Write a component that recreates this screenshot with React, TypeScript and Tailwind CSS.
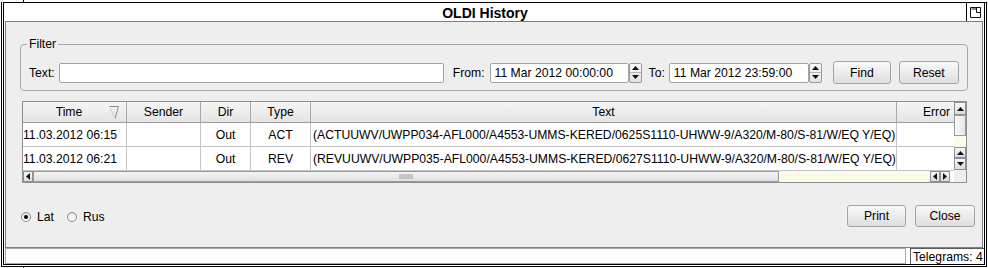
import React from "react";

const rows = [
  {
    time: "11.03.2012 06:15",
    dir: "Out",
    type: "ACT",
    text: "(ACTUUWV/UWPP034-AFL000/A4553-UMMS-KERED/0625S1110-UHWW-9/A320/M-80/S-81/W/EQ Y/EQ)",
  },
  {
    time: "11.03.2012 06:21",
    dir: "Out",
    type: "REV",
    text: "(REVUUWV/UWPP035-AFL000/A4553-UMMS-KERED/0627S1110-UHWW-9/A320/M-80/S-81/W/EQ Y/EQ)",
  },
];

function Arrow({ dir }: { dir: "up" | "down" | "left" | "right" }) {
  const d =
    dir === "up"
      ? "M0 4 L3.5 0 L7 4Z"
      : dir === "down"
      ? "M0 0 L7 0 L3.5 4Z"
      : dir === "left"
      ? "M4 0 L4 7 L0 3.5Z"
      : "M0 0 L4 3.5 L0 7Z";
  const horiz = dir === "left" || dir === "right";
  return (
    <svg width={horiz ? 4 : 7} height={horiz ? 7 : 4} viewBox={horiz ? "0 0 4 7" : "0 0 7 4"}>
      <path d={d} fill="#111" />
    </svg>
  );
}

function Spinner() {
  return (
    <div className="flex h-[20px] w-[13px] flex-col rounded-[2px] border border-[#9a9a9a] bg-linear-to-b from-[#fafafa] to-[#e2e2e2]">
      <div className="flex flex-1 items-center justify-center border-b border-[#b5b5b5]">
        <Arrow dir="up" />
      </div>
      <div className="flex flex-1 items-center justify-center">
        <Arrow dir="down" />
      </div>
    </div>
  );
}

function ScrollBtn({ dir, className }: { dir: "up" | "down" | "left" | "right"; className: string }) {
  return (
    <div className={`flex shrink-0 items-center justify-center border border-[#8f8f8f] bg-linear-to-b from-[#f8f8f8] to-[#dcdcdc] ${className}`}>
      <Arrow dir={dir} />
    </div>
  );
}

function Radio({ checked, label }: { checked: boolean; label: string }) {
  return (
    <label className="flex items-center">
      <span className="flex h-[10px] w-[10px] items-center justify-center rounded-full border border-[#8a8a8a] bg-linear-to-b from-[#e4e4e4] to-white">
        {checked && <span className="h-[4px] w-[4px] rounded-full bg-black" />}
      </span>
      <span className="ml-[6px] text-[12.2px] leading-[14px]">{label}</span>
    </label>
  );
}

const btn =
  "h-[22px] rounded-[3px] border border-[#a4a4a4] bg-linear-to-b from-[#f9f9f9] to-[#dedede] text-[12.2px] leading-[14px] text-black";

export default function App() {
  return (
    <div className="relative h-[268px] w-[988px] overflow-hidden bg-white px-[1px] pt-[2px] font-['Liberation_Sans',Arial,sans-serif] text-black">
      <div className="absolute left-[23px] top-0 h-[2px] w-px bg-black" />
      <div className="absolute bottom-0 left-[23px] h-[2px] w-px bg-black" />

      <div className="flex h-[265px] flex-col border-x-[3px] border-b-[3px] border-t border-double border-black">
        {/* title bar */}
        <div className="flex h-[18px] shrink-0">
          <div className="flex flex-1 items-center justify-center pt-[1px] text-[14px] font-bold leading-[16px]">
            OLDI History
          </div>
          <div className="flex w-[18px] items-center justify-center border-l border-black">
            <svg width="11" height="11" viewBox="0 0 11 11">
              <path d="M0.5 0.5 H10.5 V10.5 H0.5 Z M6.5 0.5 V5.5 H10.5" fill="none" stroke="#111" />
              <rect x="1.5" y="1.5" width="5" height="1" fill="#111" />
            </svg>
          </div>
        </div>

        {/* content */}
        <div className="mx-[1px] flex h-[227px] shrink-0 flex-col border border-[#7d7d7d] bg-[#eeeeee] px-[14px] pt-[15px]">
          <fieldset className="rounded-[4px] border border-[#a9a9a9] px-[8px] pb-[6px] pt-[9px]">
            <legend className="-ml-[2px] px-[2px] text-[12.2px] leading-[15px]">Filter</legend>
            <div className="flex h-[23px] items-center text-[12.2px] leading-[14px]">
              <span>Text:</span>
              <div className="ml-[4px] h-[20px] w-[385px] rounded-[2px] border border-[#a5a5a5] bg-white" />
              <span className="ml-[9px]">From:</span>
              <div className="ml-[5px] flex h-[20px] w-[139px] items-center rounded-[2px] border border-[#a5a5a5] bg-white px-[4px]">
                11 Mar 2012 00:00:00
              </div>
              <Spinner />
              <span className="ml-[7px]">To:</span>
              <div className="ml-[4px] flex h-[20px] w-[140px] items-center rounded-[2px] border border-[#a5a5a5] bg-white px-[4px]">
                11 Mar 2012 23:59:00
              </div>
              <Spinner />
              <button className={`${btn} ml-[11px] h-[23px] w-[58px]`}>Find</button>
              <button className={`${btn} ml-[8px] h-[23px] w-[60px]`}>Reset</button>
            </div>
          </fieldset>

          {/* table */}
          <div className="ml-[2px] mr-[1px] mt-[10px] flex h-[82px] border border-[#8e8e8e] bg-white text-[12.2px] leading-[14px]">
            <div className="flex min-w-0 flex-1 flex-col">
              <div className="grid h-[21px] grid-cols-[104px_74px_50px_60px_586px_1fr] border-b border-[#9c9c9c] bg-linear-to-b from-[#f6f6f6] to-[#e4e4e4]">
                <div className="flex items-center border-r border-[#a8a8a8]">
                  <span className="flex-1 pl-[6px] text-center">Time</span>
                  <svg width="10" height="13" viewBox="0 0 10 13" className="mr-[7px]">
                    <path d="M0.5 0.5 H9.5 L6 12.5" fill="none" stroke="#8a8a8a" />
                    <path d="M0.5 0.5 L6 12.5" fill="none" stroke="#d0d0d0" />
                  </svg>
                </div>
                <div className="flex items-center justify-center border-r border-[#a8a8a8]">Sender</div>
                <div className="flex items-center justify-center border-r border-[#a8a8a8]">Dir</div>
                <div className="flex items-center justify-center border-r border-[#a8a8a8]">Type</div>
                <div className="flex items-center justify-center border-r border-[#a8a8a8]">Text</div>
                <div className="flex items-center justify-end pr-[4px]">Error</div>
              </div>
              {rows.map((r) => (
                <div
                  key={r.time}
                  className="grid h-[24px] grid-cols-[104px_74px_50px_60px_586px_1fr] border-b border-[#c4c4c4]"
                >
                  <div className="flex items-center whitespace-nowrap border-r border-[#c4c4c4]">{r.time}</div>
                  <div className="border-r border-[#c4c4c4]" />
                  <div className="flex items-center justify-center border-r border-[#c4c4c4]">{r.dir}</div>
                  <div className="flex items-center justify-center border-r border-[#c4c4c4]">{r.type}</div>
                  <div className="flex items-center whitespace-nowrap border-r border-[#c4c4c4] pl-[2px]">{r.text}</div>
                  <div />
                </div>
              ))}
              {/* horizontal scrollbar */}
              <div className="flex h-[11px] bg-[#fbfbe9]">
                <ScrollBtn dir="left" className="w-[10px]" />
                <div className="flex w-[746px] items-center justify-center border border-[#9a9a9a] bg-linear-to-b from-[#f4f4f4] to-[#e0e0e0]">
                  <div className="h-[5px] w-[14px] bg-[radial-gradient(#9a9a9a_0.6px,transparent_0.8px)] bg-[length:2px_2px]" />
                </div>
                <div className="flex-1" />
                <ScrollBtn dir="left" className="w-[10px]" />
                <ScrollBtn dir="right" className="w-[10px]" />
                <div className="w-[4px] bg-white" />
              </div>
            </div>
            {/* vertical scrollbar */}
            <div className="flex w-[12px] flex-col">
              <ScrollBtn dir="up" className="h-[13px]" />
              <div className="h-[21px] border border-[#9a9a9a] bg-linear-to-r from-[#fafafa] to-[#e6e6e6]" />
              <div className="h-[11px] bg-[#fbfbe9]" />
              <ScrollBtn dir="up" className="h-[11px]" />
              <ScrollBtn dir="down" className="h-[12px]" />
              <div className="h-[12px] bg-[#eeeeee]" />
            </div>
          </div>

          {/* bottom row */}
          <div className="-mr-[7px] mt-[22px] flex h-[22px] items-center">
            <div className="ml-[1px] flex items-center gap-[13px] pt-[2px]">
              <Radio checked label="Lat" />
              <Radio checked={false} label="Rus" />
            </div>
            <div className="flex-1" />
            <button className={`${btn} w-[59px]`}>Print</button>
            <button className={`${btn} ml-[9px] w-[60px]`}>Close</button>
          </div>
        </div>

        {/* status bar */}
        <div className="ml-[1px] flex h-[16px] shrink-0 gap-[4px]">
          <div className="flex-1 border border-[#a8a8a8]" />
          <div className="flex w-[74px] items-center border-l border-t border-[#5c5c5c] pl-[2px] text-[12.2px] leading-[14px]">
            Telegrams: 4
          </div>
        </div>
      </div>
    </div>
  );
}
